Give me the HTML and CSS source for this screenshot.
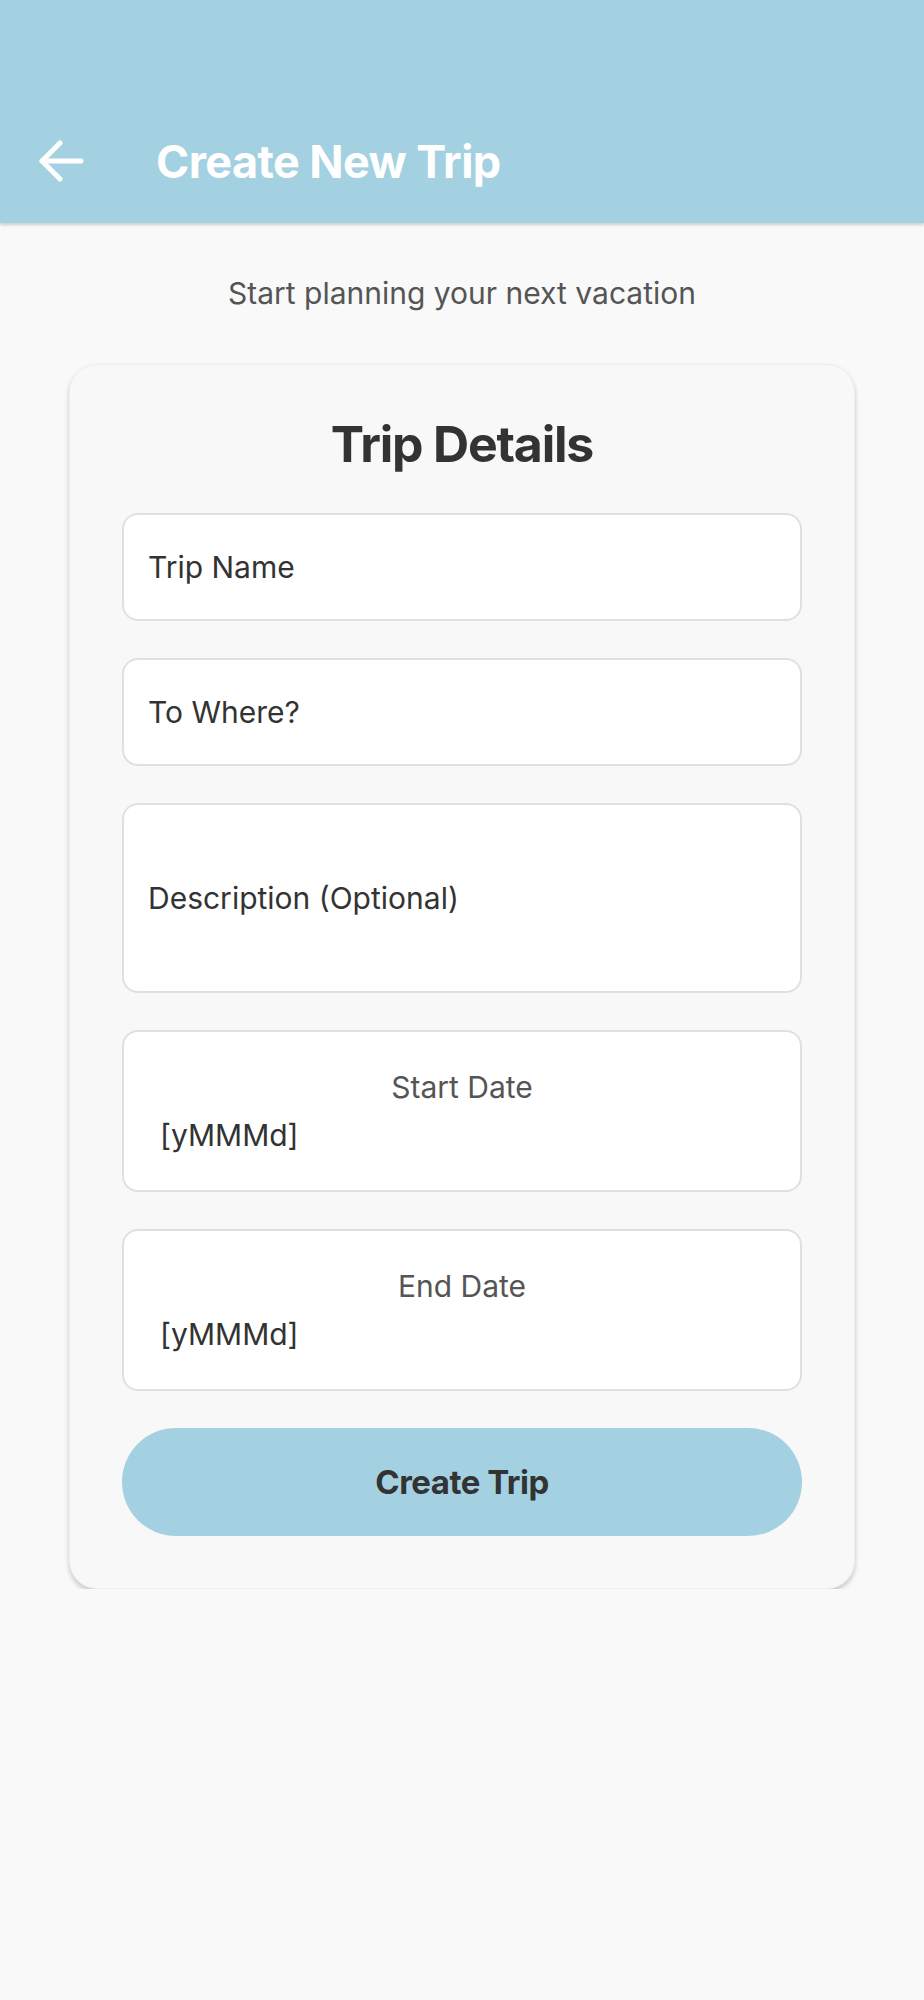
FILE: index.html
```html
<!DOCTYPE html>
<html lang="en">
<head>
    <meta charset="UTF-8">
    <meta name="viewport" content="width=device-width, initial-scale=1.0">
    <title>Create New Trip</title>
    <link rel="stylesheet" href="styles.css">
</head>
<body>
    <header class="header">
        <a href="#" class="back-btn" aria-label="Back">
            <svg width="46" height="44" viewBox="0 0 46 44" fill="none" stroke="#fff" stroke-width="5" stroke-linecap="round" stroke-linejoin="round">
                <path d="M43 21H4"/>
                <path d="M22 3L4 21l18 18"/>
            </svg>
        </a>
        <h1 class="page-title">Create New Trip</h1>
    </header>

    <p class="subtitle">Start planning your next vacation</p>

    <div class="card">
        <h2 class="card-title">Trip Details</h2>

        <div class="field">Trip Name</div>
        <div class="field">To Where?</div>
        <div class="field field-tall">Description (Optional)</div>

        <div class="field field-date">
            <span class="date-label">Start Date</span>
            <span class="date-value">[yMMMd]</span>
        </div>
        <div class="field field-date">
            <span class="date-label">End Date</span>
            <span class="date-value">[yMMMd]</span>
        </div>

        <button class="create-btn">Create Trip</button>
    </div>
</body>
</html>
```

FILE: styles.css
```css
body {
    font-family: Inter, "Noto Sans", sans-serif;
    margin: 0;
    padding: 0;
    background: #f9f9f9;
    color: #333;
}

.header {
    background: #a4d1e1;
    height: 223px;
    box-sizing: border-box;
    padding: 100px 0 0 38px;
    display: flex;
    align-items: center;
    box-shadow: 0 2px 3px rgba(0, 0, 0, 0.18);
}

.back-btn {
    display: flex;
    width: 46px;
    height: 44px;
    margin-right: 72px;
}

.page-title {
    margin: 0;
    color: white;
    font-size: 45px;
    font-weight: 700;
    letter-spacing: -0.6px;
}

.subtitle {
    text-align: center;
    font-size: 30px;
    color: #555;
    margin: 52px 0 0 0;
    line-height: 36px;
}

.card {
    margin: 53px 69px 0 69px;
    padding: 49px 52px 52px 52px;
    background: #f8f8f8;
    border: 1px solid #eeeeee;
    border-radius: 28px;
    box-shadow: 0 3px 5px rgba(0, 0, 0, 0.2);
    display: flex;
    flex-direction: column;
    gap: 37px;
}

.card-title {
    margin: 0 0 2px 0;
    text-align: center;
    font-size: 50px;
    font-weight: 700;
    line-height: 60px;
    letter-spacing: -1.2px;
}

.field {
    height: 108px;
    box-sizing: border-box;
    background: white;
    border: 2px solid #e0e0e0;
    border-radius: 16px;
    padding: 0 24px;
    display: flex;
    align-items: center;
    font-size: 30px;
    color: #333;
}

.field-tall {
    height: 190px;
}

.field-date {
    height: 162px;
    flex-direction: column;
    align-items: stretch;
    justify-content: center;
    padding: 0 36px;
}

.date-label {
    text-align: center;
    color: #555;
    margin-bottom: 12px;
}

.date-value {
    color: #333;
}

.create-btn {
    height: 108px;
    border: none;
    border-radius: 54px;
    background: #a4d1e1;
    color: #333;
    font-family: inherit;
    font-size: 33px;
    font-weight: 700;
    letter-spacing: -0.5px;
    cursor: pointer;
}
```
